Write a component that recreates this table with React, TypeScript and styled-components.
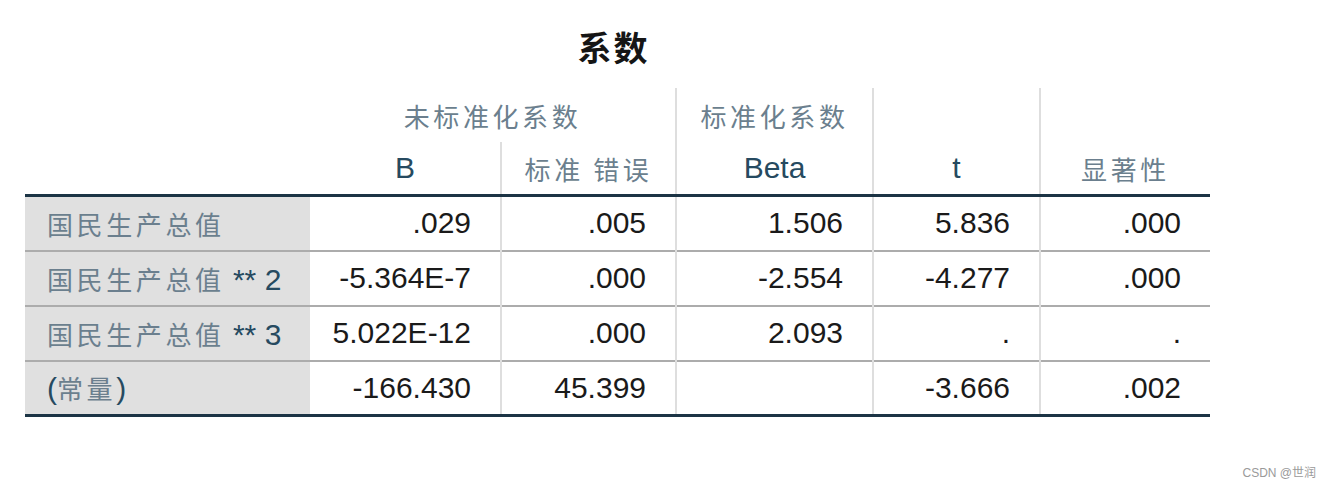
import styled, { createGlobalStyle } from "styled-components";

const GlobalStyle = createGlobalStyle`
  html, body {
    margin: 0;
    padding: 0;
    background: #ffffff;
  }
  body {
    font-family: "Liberation Sans", "Noto Sans CJK SC", sans-serif;
  }
`;

const Page = styled.div`
  width: 1331px;
  height: 484px;
  overflow: hidden;
`;

const Report = styled.div`
  width: 1185px;
  margin-left: 25px;
`;

const Title = styled.h1`
  margin: 0 0 8px;
  padding-top: 14px;
  height: 66px;
  line-height: 66px;
  text-align: center;
  font-family: "Noto Sans CJK SC", serif;
  font-size: 34px;
  font-weight: 700;
  color: #151515;
  letter-spacing: 2px;
  text-indent: -8px;
`;

const Table = styled.table`
  width: 1185px;
  table-layout: fixed;
  border-collapse: collapse;
`;

const HeadCell = styled.th<{ $line?: boolean; $latin?: boolean; $h: number }>`
  height: ${(p) => p.$h}px;
  padding: 0;
  text-align: center;
  vertical-align: middle;
  font-weight: 400;
  font-size: 30px;
  color: ${(p) => (p.$latin ? "#264a60" : "#6b7f8e")};
  border-left: ${(p) => (p.$line ? "2px solid #dedede" : "none")};
`;

const HeadBottom = styled(HeadCell)`
  border-bottom: 3px solid #1c3445;
`;

const Han = styled.span`
  font-family: "Noto Sans CJK SC", sans-serif;
  font-size: 26px;
  letter-spacing: 3.6px;
`;

const Row = styled.tr<{ $last?: boolean }>`
  height: 55px;
  border-bottom: ${(p) => (p.$last ? "3px solid #1c3445" : "2px solid #acacac")};
`;

const Label = styled.th`
  background: #e0e0e0;
  padding: 0 0 0 22px;
  text-align: left;
  font-weight: 400;
  font-size: 30px;
  color: #264a60;
  white-space: nowrap;

  ${Han} {
    color: #6b7f8e;
  }
`;

const Num = styled.td<{ $line?: boolean }>`
  padding: 0 29px 0 0;
  text-align: right;
  font-size: 30px;
  color: #1a1a1a;
  border-left: ${(p) => (p.$line ? "2px solid #dedede" : "none")};
`;

const Watermark = styled.div`
  margin-top: 46px;
  padding-right: 15px;
  text-align: right;
  font-family: "Liberation Sans", "Noto Sans CJK SC", sans-serif;
  font-size: 12px;
  color: #9a9a9a;
`;

type DataRow = { label: string; power?: string; values: string[] };

const rows: DataRow[] = [
  { label: "国民生产总值", values: [".029", ".005", "1.506", "5.836", ".000"] },
  { label: "国民生产总值", power: " ** 2", values: ["-5.364E-7", ".000", "-2.554", "-4.277", ".000"] },
  { label: "国民生产总值", power: " ** 3", values: ["5.022E-12", ".000", "2.093", ".", "."] },
  { label: "(常量)", values: ["-166.430", "45.399", "", "-3.666", ".002"] },
];

function LabelText({ text }: { text: string }) {
  if (text.startsWith("(")) {
    return (
      <>
        (<Han>常量</Han>)
      </>
    );
  }
  return <Han>{text}</Han>;
}

export default function App() {
  return (
    <Page>
      <GlobalStyle />
      <Report>
        <Title>系数</Title>
        <Table>
          <colgroup>
            <col style={{ width: 285 }} />
            <col style={{ width: 191 }} />
            <col style={{ width: 175 }} />
            <col style={{ width: 197 }} />
            <col style={{ width: 167 }} />
            <col style={{ width: 170 }} />
          </colgroup>
          <thead>
            <tr>
              <HeadCell $h={54} />
              <HeadCell $h={54} colSpan={2}>
                <Han>未标准化系数</Han>
              </HeadCell>
              <HeadCell $h={54} $line>
                <Han>标准化系数</Han>
              </HeadCell>
              <HeadCell $h={54} $line />
              <HeadCell $h={54} $line />
            </tr>
            <tr>
              <HeadBottom $h={52} />
              <HeadBottom $h={52} $latin>
                B
              </HeadBottom>
              <HeadBottom $h={52} $line>
                <Han>标准 错误</Han>
              </HeadBottom>
              <HeadBottom $h={52} $line $latin>
                Beta
              </HeadBottom>
              <HeadBottom $h={52} $line $latin>
                t
              </HeadBottom>
              <HeadBottom $h={52} $line>
                <Han>显著性</Han>
              </HeadBottom>
            </tr>
          </thead>
          <tbody>
            {rows.map((r, i) => (
              <Row key={i} $last={i === rows.length - 1}>
                <Label>
                  <LabelText text={r.label} />
                  {r.power}
                </Label>
                {r.values.map((v, j) => (
                  <Num key={j} $line={j > 0}>
                    {v}
                  </Num>
                ))}
              </Row>
            ))}
          </tbody>
        </Table>
      </Report>
      <Watermark>CSDN @世润</Watermark>
    </Page>
  );
}
